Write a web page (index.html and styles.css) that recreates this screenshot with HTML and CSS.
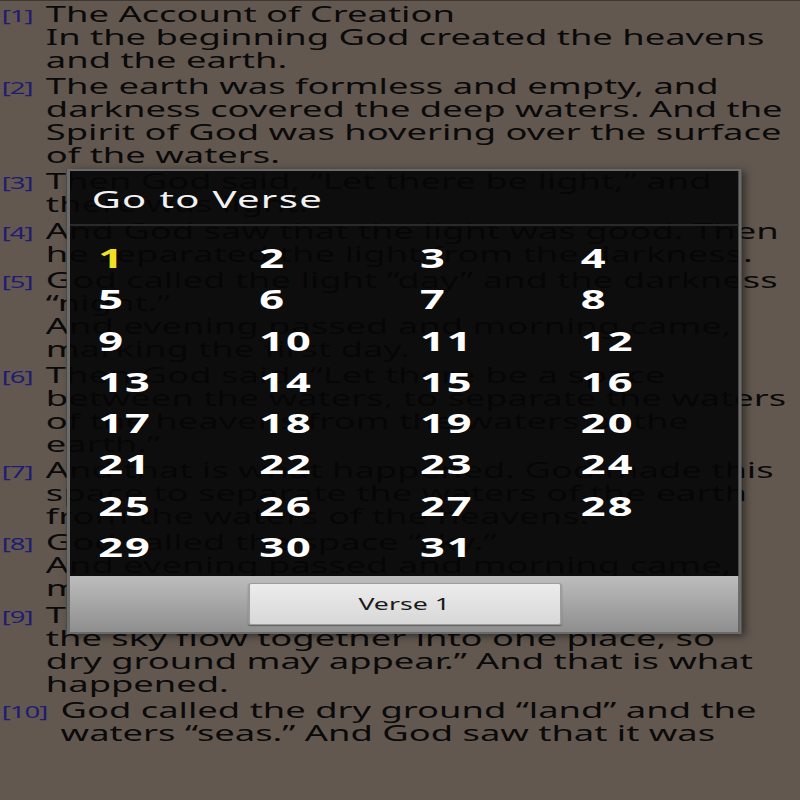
FILE: index.html
```html
<!DOCTYPE html>
<html lang="en">
<head>
    <meta charset="UTF-8">
    <meta name="viewport" content="width=device-width, initial-scale=1.0">
    <title>Genesis 1</title>
    <link rel="stylesheet" href="styles.css">
</head>
<body>
    <div class="screen">
        <div class="reader">
            <div class="verse"><span class="num">[1]</span><p class="text">The Account of Creation<br>In the beginning God created the heavens and the earth.</p></div>
            <div class="verse"><span class="num">[2]</span><p class="text">The earth was formless and empty, and darkness covered the deep waters. And the Spirit of God was hovering over the surface of the waters.</p></div>
            <div class="verse"><span class="num">[3]</span><p class="text">Then God said, “Let there be light,” and there was light.</p></div>
            <div class="verse"><span class="num">[4]</span><p class="text">And God saw that the light was good. Then he separated the light from the darkness.</p></div>
            <div class="verse"><span class="num">[5]</span><p class="text">God called the light “day” and the darkness “night.”<br>And evening passed and morning came, marking the first day.</p></div>
            <div class="verse"><span class="num">[6]</span><p class="text">Then God said, “Let there be a space between the waters, to separate the waters of the heavens from the waters of the earth.”</p></div>
            <div class="verse"><span class="num">[7]</span><p class="text">And that is what happened. God made this space to separate the waters of the earth from the waters of the heavens.</p></div>
            <div class="verse"><span class="num">[8]</span><p class="text">God called the space “sky.”<br>And evening passed and morning came, marking the second day.</p></div>
            <div class="verse"><span class="num">[9]</span><p class="text">Then God said, “Let the waters beneath<br>the sky flow together into one place, so<br>dry ground may appear.” And that is what happened.</p></div>
            <div class="verse"><span class="num">[10]</span><p class="text">God called the dry ground “land” and the waters “seas.” And God saw that it was good.</p></div>
        </div>

        <!-- go to verse dialog -->
        <div class="dialog">
            <div class="dialog-title">Go to Verse</div>
            <div class="verse-grid">
                <span class="cell current">1</span>
                <span class="cell">2</span>
                <span class="cell">3</span>
                <span class="cell">4</span>
                <span class="cell">5</span>
                <span class="cell">6</span>
                <span class="cell">7</span>
                <span class="cell">8</span>
                <span class="cell">9</span>
                <span class="cell">10</span>
                <span class="cell">11</span>
                <span class="cell">12</span>
                <span class="cell">13</span>
                <span class="cell">14</span>
                <span class="cell">15</span>
                <span class="cell">16</span>
                <span class="cell">17</span>
                <span class="cell">18</span>
                <span class="cell">19</span>
                <span class="cell">20</span>
                <span class="cell">21</span>
                <span class="cell">22</span>
                <span class="cell">23</span>
                <span class="cell">24</span>
                <span class="cell">25</span>
                <span class="cell">26</span>
                <span class="cell">27</span>
                <span class="cell">28</span>
                <span class="cell">29</span>
                <span class="cell">30</span>
                <span class="cell">31</span>
            </div>
            <div class="button-bar">
                <button class="button">Verse 1</button>
            </div>
        </div>
    </div>
</body>
</html>
```

FILE: styles.css
```css
*{
    padding: 0;
    margin: 0;
    box-sizing: border-box;
}

:root {
    --bg-color: #625850; /*dimmed page behind the dialog*/
    --text-color: #0a0a0a;
    --num-color: #1f1d72;
    --dialog-color: rgba(6, 5, 5, 0.9);
}

body {
    background-color: var(--bg-color);
    overflow: hidden;
}

/* phone screen, stretched sideways like the capture */
.screen {
    position: relative;
    width: 480px;
    height: 800px;
    transform: scaleX(1.6667);
    transform-origin: 0 0;
    font-family: "Noto Sans", sans-serif;
    border-top: 1px solid #3f3732;
}

.reader {
    height: 746px;
    overflow: hidden;
    padding: 1px 1px 0 1px;
}

.verse {
    display: flex;
    align-items: baseline;
    gap: 8px;
    margin-bottom: 3.2px;
}

.num {
    font-size: 16.5px;
    letter-spacing: -0.6px;
    color: var(--num-color);
    flex-shrink: 0;
}

.text {
    flex: 1;
    font-size: 21.8px;
    line-height: 23px;
    color: var(--text-color);
}

.dialog {
    position: absolute;
    left: 40px;
    top: 168px;
    width: 405px;
    border: 2px solid #6a6a6a;
    background-color: var(--dialog-color);
    box-shadow: 2px 2px 6px rgba(0, 0, 0, 0.5);
}

.dialog-title {
    height: 55px;
    line-height: 55px;
    padding-left: 13px;
    font-size: 24px;
    letter-spacing: 0.8px;
    color: #f2f2f2;
    border-bottom: 2px solid #2a2a2a;
}

.verse-grid {
    display: grid;
    grid-template-columns: repeat(4, 96.5px);
    grid-auto-rows: 41.3px;
    padding: 12px 0 8px 17px;
}

.cell {
    font-size: 26px;
    font-weight: bold;
    letter-spacing: 1.2px;
    line-height: 41.3px;
    color: #ffffff;
}

.cell.current {
    color: #f2e022;
}

.button-bar {
    display: flex;
    justify-content: center;
    padding: 7px 0 7px;
    background: linear-gradient(#bdbdbd, #8e8e8e);
}

.button {
    width: 188px;
    height: 42px;
    font-family: "Noto Sans", sans-serif;
    font-size: 16px;
    color: #1a1a1a;
    background: linear-gradient(#ececec, #d8d8d8);
    border: 1px solid #9c9c9c;
    border-radius: 2px;
    box-shadow: 0 1px 1px rgba(0, 0, 0, 0.35);
}
```
